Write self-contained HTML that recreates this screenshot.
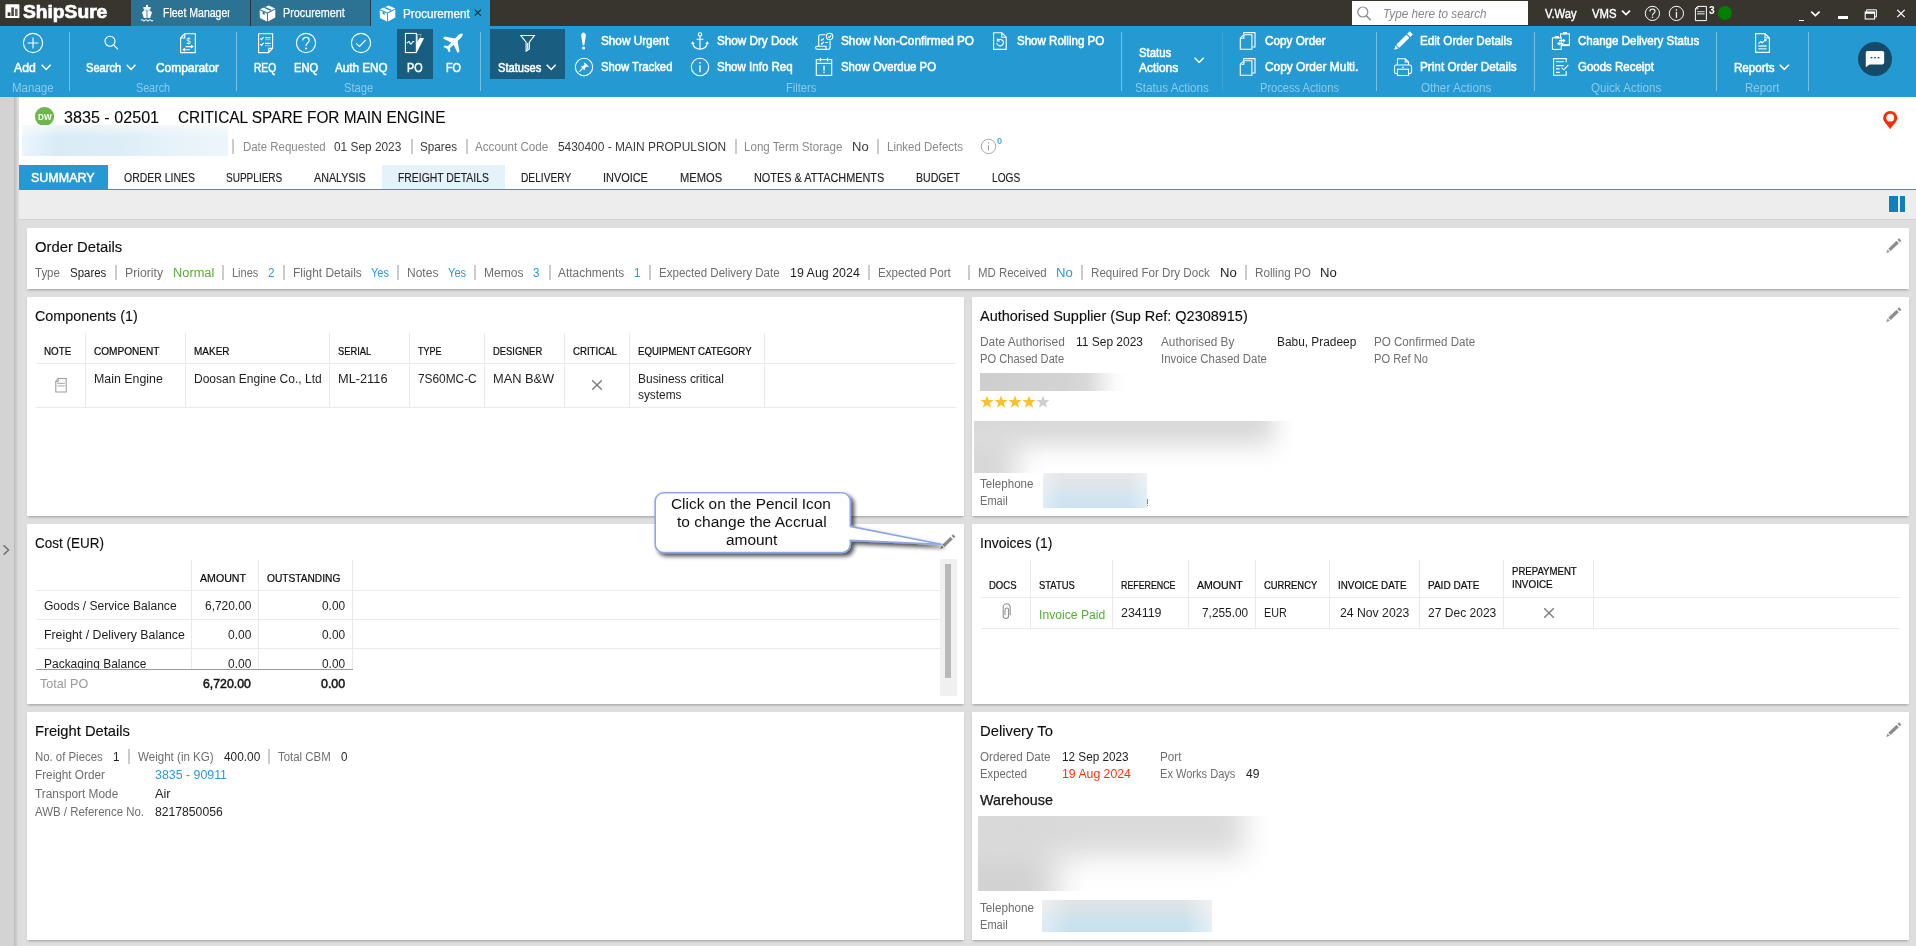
<!DOCTYPE html><html><head><meta charset="utf-8"><title>ShipSure Procurement</title><style>
html,body{margin:0;padding:0}
body{width:1916px;height:946px;overflow:hidden;position:relative;background:#dedede;font-family:"Liberation Sans", sans-serif;}
#r div,#r svg{position:absolute}
#r span.t{position:absolute;white-space:pre;line-height:1;transform-origin:0 0;display:block}
#r span.r{transform-origin:100% 0}

</style></head><body><div id="r">
<div style="left:0px;top:0px;width:1916px;height:26px;background:#38352f;"></div>
<div style="left:0px;top:25.6px;width:1916px;height:71px;background:#2599d1;"></div>
<div style="left:0px;top:96.6px;width:14px;height:850px;background:#d3d3d3;"></div>
<div style="left:14px;top:96.6px;width:5.4px;height:850px;background:linear-gradient(90deg,#b8b8b8 0%,#c9c9c9 35%,#d8d8d8 70%,#dedede 100%);"></div>
<div style="left:19px;top:96.6px;width:1897px;height:93px;background:#fff;"></div>
<div style="left:19px;top:190px;width:1897px;height:29.6px;background:#ededed;"></div>
<div style="left:19px;top:219.4px;width:1897px;height:1px;background:#d2d2d2;"></div>
<svg style="left:2px;top:544px" width="9" height="12" viewBox="0 0 9 12"><path d="M1.6 1.4 L6.6 6 L1.6 10.6" fill="none" stroke="#707070" stroke-width="1.45"/></svg>
<svg style="left:4.5px;top:4px" width="15" height="15" viewBox="0 0 15 15"><rect x="0.4" y="0.2" width="14" height="13.9" rx="0.9" fill="#fff"/><rect x="2.7" y="8.4" width="2.7" height="3.6" fill="#38352f"/><rect x="6.3" y="3.4" width="2.6" height="8.6" fill="#4b4843"/><rect x="10" y="4.8" width="2.6" height="7.2" fill="#67645f"/></svg>
<div style="left:131px;top:0px;width:119.3px;height:25.6px;background:#2c7393;"></div>
<div style="left:250.3px;top:0px;width:0.9px;height:25.6px;background:#2a3238;"></div>
<div style="left:251.2px;top:0px;width:119.3px;height:25.6px;background:#2c7393;"></div>
<div style="left:370.3px;top:0px;width:0.7px;height:25.6px;background:#2a3a44;"></div>
<div style="left:371px;top:0px;width:119px;height:26px;background:#2599d1;"></div>
<svg style="left:140px;top:4px" width="14" height="18" viewBox="0 0 14 18"><g fill="#fff"><rect x="6" y="0.9" width="2" height="2.8"/><rect x="3.3" y="3.1" width="7.4" height="1.7"/><path d="M4.1 4.6 H9.9 L10.3 7 L12 8.3 L10.2 14.1 H3.8 L2 8.3 L3.7 7Z"/></g><rect x="6.55" y="5.6" width="0.9" height="8.6" fill="#2c7393"/><path d="M4.4 6.2 H5.6 M8.4 6.2 H9.6" stroke="#2c7393" stroke-width="0.7"/><path d="M1 16.3 q1 -1.3 2 0 t2 0 t2 0 t2 0 t2 0 t2 0" fill="none" stroke="#fff" stroke-width="1.05"/></svg>
<svg style="left:258.5px;top:4.5px" width="17" height="17" viewBox="0 0 17 17"><g fill="#fff"><path d="M0.7 5.2 L8 8.5 V16.5 L0.9 13.1Z"/><path d="M8.9 8.5 L16.3 4.4 V12.6 L8.9 16.5Z"/><path d="M0.9 4.3 L9.7 0.5 L16.2 3.4 L8.4 7.5Z"/></g><path d="M4.6 2.7 L6.4 1.95 L13 4.9 L11.4 5.75Z" fill="#2c7393"/><path d="M3.7 6.6 L5.7 7.5 V10.2 L4.7 9.3 L3.7 9.4Z" fill="#2c7393"/><path d="M8.45 8.3 V16.4" stroke="#2c7393" stroke-width="0.5"/></svg>
<svg style="left:378.7px;top:4.5px" width="17" height="17" viewBox="0 0 17 17"><g fill="#fff"><path d="M0.7 5.2 L8 8.5 V16.5 L0.9 13.1Z"/><path d="M8.9 8.5 L16.3 4.4 V12.6 L8.9 16.5Z"/><path d="M0.9 4.3 L9.7 0.5 L16.2 3.4 L8.4 7.5Z"/></g><path d="M4.6 2.7 L6.4 1.95 L13 4.9 L11.4 5.75Z" fill="#2599d1"/><path d="M3.7 6.6 L5.7 7.5 V10.2 L4.7 9.3 L3.7 9.4Z" fill="#2599d1"/><path d="M8.45 8.3 V16.4" stroke="#2599d1" stroke-width="0.5"/></svg>
<svg style="left:474.2px;top:9px" width="8" height="8" viewBox="0 0 8 8"><path d="M0.7 0.7 L6.9 6.6 M6.9 0.7 L0.7 6.6" stroke="#1d2a33" stroke-width="1.1" fill="none"/></svg>
<div style="left:1352px;top:1px;width:176px;height:24px;background:#fff;"></div>
<svg style="left:1356px;top:5px" width="16" height="17" viewBox="0 0 16 17"><circle cx="6.8" cy="7" r="5" fill="none" stroke="#8a8a8a" stroke-width="1.2"/><path d="M10.4 10.8 L14.6 15.2" stroke="#8a8a8a" stroke-width="1.5"/></svg>
<svg style="left:1621px;top:9px" width="10" height="8" viewBox="0 0 10 8"><path d="M1 1.6 L5 5.6 L9 1.6" fill="none" stroke="#fff" stroke-width="1.6"/></svg>
<svg style="left:1644px;top:5px" width="17" height="17" viewBox="0 0 17 17"><circle cx="8.4" cy="8.4" r="7.1" fill="none" stroke="#fff" stroke-width="1"/><path d="M5.9 6.6 q0 -2.6 2.6 -2.6 q2.5 0 2.5 2.3 q0 1.3 -1.3 2.1 q-1.2 0.8 -1.2 2.1" fill="none" stroke="#fff" stroke-width="1.1"/><rect x="7.9" y="11.6" width="1.2" height="1.3" fill="#fff"/></svg>
<svg style="left:1668px;top:5px" width="17" height="17" viewBox="0 0 17 17"><circle cx="8.4" cy="8.4" r="7.1" fill="none" stroke="#fff" stroke-width="1"/><rect x="7.8" y="4.2" width="1.3" height="1.4" fill="#fff"/><rect x="7.8" y="6.8" width="1.3" height="6" fill="#fff"/></svg>
<svg style="left:1694px;top:5px" width="14" height="17" viewBox="0 0 14 17"><path d="M3.6 1.4 H12.4 V15.6 H1.4 V3.6Z" fill="none" stroke="#fff" stroke-width="1"/><path d="M1.4 3.8 H3.8 V1.4" fill="none" stroke="#fff" stroke-width="0.9"/><rect x="3.2" y="6.2" width="7.4" height="1" fill="#ddd"/><rect x="3.2" y="8" width="7.4" height="1.6" fill="#aaa"/></svg>
<div style="left:1718px;top:6.2px;width:14.2px;height:14.2px;border-radius:50%;background:#008000"></div>
<div style="left:1798.7px;top:20.2px;width:5.4px;height:1px;background:#fff;"></div>
<svg style="left:1810px;top:9.5px" width="11" height="8" viewBox="0 0 11 8"><path d="M1.2 1.6 L5.4 5.6 L9.6 1.6" fill="none" stroke="#fff" stroke-width="1.7"/></svg>
<div style="left:1838.2px;top:15.8px;width:9.5px;height:3.1px;background:#fff;"></div>
<svg style="left:1864px;top:8.5px" width="14" height="11" viewBox="0 0 14 11"><path d="M2.6 2.8 V0.8 H12.4 V8 H10.6" fill="none" stroke="#fff" stroke-width="1"/><rect x="1.2" y="3" width="9.4" height="7" fill="none" stroke="#fff" stroke-width="1.1"/><rect x="1.2" y="3" width="9.4" height="1.8" fill="#fff"/></svg>
<svg style="left:1896px;top:9px" width="10" height="9" viewBox="0 0 10 9"><path d="M1.3 0.9 L8.7 8.1 M8.7 0.9 L1.3 8.1" stroke="#fff" stroke-width="1.3" fill="none"/></svg>
<div style="left:69.2px;top:32px;width:1px;height:59px;background:rgba(255,255,255,0.38);"></div>
<div style="left:236.2px;top:32px;width:1px;height:59px;background:rgba(255,255,255,0.38);"></div>
<div style="left:480.4px;top:32px;width:1px;height:59px;background:rgba(255,255,255,0.38);"></div>
<div style="left:1121.2px;top:32px;width:1px;height:59px;background:rgba(255,255,255,0.38);"></div>
<div style="left:1376.2px;top:32px;width:1px;height:59px;background:rgba(255,255,255,0.38);"></div>
<div style="left:1534.2px;top:32px;width:1px;height:59px;background:rgba(255,255,255,0.38);"></div>
<div style="left:1716.4px;top:32px;width:1px;height:59px;background:rgba(255,255,255,0.38);"></div>
<div style="left:1808.2px;top:32px;width:1px;height:59px;background:rgba(255,255,255,0.38);"></div>
<div style="left:1222.3px;top:32px;width:1px;height:59px;background:rgba(255,255,255,0.12);"></div>
<div style="left:397px;top:28.8px;width:36px;height:50.2px;background:#195d80;"></div>
<div style="left:490px;top:28.8px;width:75px;height:50.2px;background:#195d80;"></div>
<svg style="left:40.6px;top:64.3px" width="10.4" height="6.3" viewBox="0 0 10.4 6.3"><path d="M0.7 0.7 L5.2 5.3999999999999995 L9.700000000000001 0.7" fill="none" stroke="#fff" stroke-width="1.5"/></svg>
<svg style="left:126.0px;top:64.3px" width="10.2" height="6.3" viewBox="0 0 10.2 6.3"><path d="M0.7 0.7 L5.1 5.3999999999999995 L9.5 0.7" fill="none" stroke="#fff" stroke-width="1.5"/></svg>
<svg style="left:546.0px;top:64.3px" width="10.4" height="6.3" viewBox="0 0 10.4 6.3"><path d="M0.7 0.7 L5.2 5.3999999999999995 L9.700000000000001 0.7" fill="none" stroke="#fff" stroke-width="1.5"/></svg>
<svg style="left:1194.0px;top:56.9px" width="10.4" height="6.3" viewBox="0 0 10.4 6.3"><path d="M0.7 0.7 L5.2 5.3999999999999995 L9.700000000000001 0.7" fill="none" stroke="#fff" stroke-width="1.5"/></svg>
<svg style="left:1779.4px;top:64.3px" width="10.6" height="6.3" viewBox="0 0 10.6 6.3"><path d="M0.7 0.7 L5.3 5.3999999999999995 L9.9 0.7" fill="none" stroke="#fff" stroke-width="1.5"/></svg>
<svg style="left:22px;top:32px" width="22" height="22" viewBox="0 0 22 22"><circle cx="11" cy="11" r="9.6" fill="none" stroke="#fff" stroke-width="1.12"/><path d="M11 5.6 V16.4 M5.6 11 H16.4" fill="none" stroke="#fff" stroke-width="1.12" stroke-width="1.2"/></svg>
<svg style="left:102px;top:33px" width="18" height="18" viewBox="0 0 18 18"><circle cx="8" cy="8.2" r="5" fill="none" stroke="#fff" stroke-width="1.12" stroke-width="1"/><path d="M11.6 11.9 L16 16.4" fill="none" stroke="#fff" stroke-width="1.12" stroke-width="1.3"/></svg>
<svg style="left:179px;top:32px" width="18" height="22" viewBox="0 0 18 22"><path d="M5.6 1.8 H16.3 V20.6 H1.6 V5.8Z" fill="none" stroke="#fff" stroke-width="1.12" stroke-width="1.15"/><path d="M1.8 6 H5.8 V2" fill="none" stroke="#fff" stroke-width="1.12" stroke-width="0.8"/><text x="0" y="0" transform="translate(9.4 11.6) scale(0.8 1)" font-size="9.6" font-family="Liberation Sans, sans-serif" fill="#fff" text-anchor="middle">$</text><path d="M6.6 14.6 H13.6 M12 13.2 L13.8 14.6 L12 16 M11 17.7 H4.4 M6 16.3 L4.2 17.7 L6 19.1" fill="none" stroke="#fff" stroke-width="1.12" stroke-width="0.85"/></svg>
<svg style="left:257px;top:32px" width="18" height="22" viewBox="0 0 18 22"><path d="M1.6 1.8 H15.6 V16.2 L11.6 20.6 H1.6Z" fill="none" stroke="#fff" stroke-width="1.12" stroke-width="1.15"/><path d="M15.4 16.4 H11.8 V20.4" fill="none" stroke="#fff" stroke-width="1.12" stroke-width="0.8"/><path d="M8 5.8 H13.6 M8 11.4 H13.6" fill="none" stroke="#fff" stroke-width="1.12" stroke-width="1"/><path d="M8 7.7 H13.6 M8 13.7 H13.6" stroke="#fff" stroke-width="0.9" opacity="0.6"/><path d="M3.3 6.4 L4.5 7.6 L6.7 5 M3.3 12.2 L4.5 13.4 L6.7 10.8" fill="none" stroke="#fff" stroke-width="1.12" stroke-width="1.05"/></svg>
<svg style="left:295px;top:32px" width="22" height="22" viewBox="0 0 22 22"><circle cx="11" cy="11" r="9.6" fill="none" stroke="#fff" stroke-width="1.12"/><path d="M7.8 8.6 q0 -3.2 3.3 -3.2 q3.1 0 3.1 2.9 q0 1.6 -1.6 2.7 q-1.6 1.1 -1.6 2.9" fill="none" stroke="#fff" stroke-width="1.12" stroke-width="1.5"/><rect x="10.2" y="15.6" width="1.7" height="1.7" fill="#fff"/></svg>
<svg style="left:350px;top:32px" width="22" height="22" viewBox="0 0 22 22"><circle cx="11" cy="11" r="9.6" fill="none" stroke="#fff" stroke-width="1.12"/><path d="M6.2 11.3 L9.5 14.4 L15.8 7.8" fill="none" stroke="#fff" stroke-width="1.12" stroke-width="1.8"/></svg>
<svg style="left:403px;top:32px" width="22" height="22" viewBox="0 0 22 22"><rect x="2.45" y="1.45" width="10.9" height="19.1" fill="none" stroke="#fff" stroke-width="1.12" stroke-width="1.15"/><path d="M4 11.2 L5.3 9.9 q1.3 -0.7 1.5 0.8 q0.2 1.7 1.6 1 q0.9 -0.6 0.9 -1.5 q0.7 -1.1 1.9 -0.4" fill="none" stroke="#fff" stroke-width="1.12" stroke-width="0.95"/><path d="M13.9 2.2 H18.9 L17 5.4 L17.6 3 H14.9 V10.6 H13.9Z" fill="#9dbccc"/><path d="M17 5.6 L21 6.3 L14.2 19.8 L13.2 19.6 V11.2Z" fill="#fff"/></svg>
<svg style="left:442px;top:32px" width="22" height="22" viewBox="0 0 22 22"><path d="M19.6 1.4 q1.4 -0.2 1.2 1.2 q-0.3 1.4 -1.6 2.8 L15.6 9 L17.4 19.4 L15.6 21 L11.6 12.8 L8 16 L8.4 19.2 L7 20.6 L5.2 16.8 L1.4 15 L2.8 13.6 L6 14 L9.2 10.4 L1 6.4 L2.6 4.6 L13 6.4 L16.6 2.8 q1.5 -1.2 3 -1.4Z" fill="#fff"/></svg>
<svg style="left:519px;top:34px" width="18" height="19" viewBox="0 0 18 19"><path d="M1.8 1.5 H15.4 L10.3 8.2 V15 L7.1 17.2 V8.2Z" fill="none" stroke="#fff" stroke-width="1.12" stroke-width="1.5"/><path d="M8.7 9 V15.4" fill="none" stroke="#fff" stroke-width="1.12" stroke-width="0.7"/></svg>
<svg style="left:579px;top:31px" width="9" height="20" viewBox="0 0 9 20"><path d="M2 3.4 q2.5 -3.6 5 0 L5.3 14.2 H3.7Z" fill="#fff"/><circle cx="4.5" cy="17" r="1.55" fill="#fff"/></svg>
<svg style="left:574px;top:57px" width="20" height="20" viewBox="0 0 20 20"><circle cx="10" cy="10" r="8.7" fill="none" stroke="#fff" stroke-width="1.12"/><path d="M10.4 5.2 L14.8 9.6 L13.8 10 L12.6 9.4 L10.8 11.2 L10.6 13.4 L6.6 9.4 L8.8 9.2 L10.6 7.4 L10 6.2Z" fill="#fff"/><path d="M8.6 11.4 L5.4 14.6" fill="none" stroke="#fff" stroke-width="1.12" stroke-width="1"/></svg>
<svg style="left:691px;top:31px" width="18" height="20" viewBox="0 0 18 20"><circle cx="9" cy="3.4" r="1.7" fill="none" stroke="#fff" stroke-width="1.12"/><path d="M9 5.2 V18 M5.6 8.2 H12.4 M1.6 11.4 q0.6 6.4 7.4 6.8 q6.8 -0.4 7.4 -6.8 M0.6 13 L1.6 11.2 L3.2 12.8 M14.8 12.8 L16.4 11.2 L17.4 13" fill="none" stroke="#fff" stroke-width="1.12" stroke-width="1.2"/></svg>
<svg style="left:690px;top:57px" width="20" height="20" viewBox="0 0 20 20"><circle cx="10" cy="10" r="8.7" fill="none" stroke="#fff" stroke-width="1.12"/><rect x="9.3" y="5" width="1.4" height="1.6" fill="#fff"/><rect x="9.3" y="8.2" width="1.4" height="7" fill="#fff"/></svg>
<svg style="left:814px;top:32px" width="20" height="19" viewBox="0 0 20 19"><path d="M4.7 14.2 V4.5 q0 -1.7 1.7 -1.7 H11.6 M16.1 8.4 V15.2 q0 2.2 -2.1 2.2" fill="none" stroke="#fff" stroke-width="1.12" stroke-width="1"/><path d="M2.9 14.3 H12 V15.9 q0 1.5 1.8 1.5 H3.6 q-2 0 -2 -1.6 q0 -1.5 1.3 -1.5Z" fill="none" stroke="#fff" stroke-width="1.12" stroke-width="1"/><circle cx="15.6" cy="4.5" r="3.2" fill="none" stroke="#fff" stroke-width="1.12" stroke-width="0.95"/><path d="M14.1 4.7 L15.2 5.7 L17.2 3.4" fill="none" stroke="#fff" stroke-width="1.12" stroke-width="0.9"/><path d="M7 7.7 L7.8 8.4 L9.8 6.3 M7 11.5 L7.8 12.2 L9.8 9.8 M11.2 10.5 H14" fill="none" stroke="#fff" stroke-width="1.12" stroke-width="0.85"/></svg>
<svg style="left:815px;top:57px" width="18" height="20" viewBox="0 0 18 20"><rect x="1.3" y="2.6" width="15.4" height="15.8" fill="none" stroke="#fff" stroke-width="1.12" stroke-width="1.15"/><path d="M1.3 6.4 H16.7" fill="none" stroke="#fff" stroke-width="1.12" stroke-width="1"/><path d="M5.4 0.8 V4.6 M12.6 0.8 V4.6" fill="none" stroke="#fff" stroke-width="1.12" stroke-width="1.6"/><rect x="8.3" y="8.6" width="1.4" height="5" fill="#fff"/><rect x="8.3" y="14.6" width="1.4" height="1.4" fill="#fff"/></svg>
<svg style="left:992px;top:31px" width="16" height="20" viewBox="0 0 16 20"><path d="M1.6 1.8 H9.8 L14.2 6.2 V18.4 H1.6Z" fill="none" stroke="#fff" stroke-width="1.12"/><path d="M9.8 1.8 V6.2 H14.2" fill="none" stroke="#fff" stroke-width="1.12" stroke-width="0.9"/><path d="M6 9 A3.3 3.3 0 1 1 4.8 12" fill="none" stroke="#fff" stroke-width="1.12" stroke-width="0.95"/><path d="M5.4 7.6 V10 H7.8" fill="none" stroke="#fff" stroke-width="1.12" stroke-width="0.9"/></svg>
<svg style="left:1239.4px;top:31px" width="18" height="20" viewBox="0 0 18 20"><path d="M4.7 3.2 V1.6 H16 V16 H13.4" fill="none" stroke="#fff" stroke-width="1.12" stroke-width="1.1"/><path d="M4.8 3.7 H12.9 V18.3 H1.3 V7.2Z" fill="none" stroke="#fff" stroke-width="1.12" stroke-width="1.2"/><path d="M1.5 7.3 H4.9 V3.9" fill="none" stroke="#fff" stroke-width="1.12" stroke-width="0.8"/></svg>
<svg style="left:1239.4px;top:57.3px" width="18" height="20" viewBox="0 0 18 20"><path d="M4.7 3.2 V1.6 H16 V16 H13.4" fill="none" stroke="#fff" stroke-width="1.12" stroke-width="1.1"/><path d="M4.8 3.7 H12.9 V18.3 H1.3 V7.2Z" fill="none" stroke="#fff" stroke-width="1.12" stroke-width="1.2"/><path d="M1.5 7.3 H4.9 V3.9" fill="none" stroke="#fff" stroke-width="1.12" stroke-width="0.8"/></svg>
<svg style="left:1393px;top:31px" width="20" height="20" viewBox="0 0 20 20"><g transform="rotate(-44.6 10 10)" fill="#fff"><path d="M-2.4 10 L1.6 7.9 V12.1Z"/><rect x="2.6" y="7.8" width="14.2" height="4.4"/><rect x="18" y="7.8" width="3.6" height="4.4"/></g></svg>
<svg style="left:1393px;top:57px" width="20" height="20" viewBox="0 0 20 20"><path d="M4.5 8 V1.8 H12.2 L15.5 5 V8" fill="none" stroke="#fff" stroke-width="1.12" stroke-width="1.1"/><path d="M12.2 1.8 V5 H15.5" fill="none" stroke="#fff" stroke-width="1.12" stroke-width="0.8"/><rect x="1.5" y="8" width="17" height="8.6" rx="1.8" fill="none" stroke="#fff" stroke-width="1.12" stroke-width="1.15"/><rect x="4.5" y="12.2" width="11" height="6.3" fill="#2599d1" stroke="#fff" stroke-width="1.1"/><path d="M9 10.2 H11" fill="none" stroke="#fff" stroke-width="1.12"/></svg>
<svg style="left:1551px;top:31px" width="20" height="20" viewBox="0 0 20 20"><rect x="9.6" y="2.8" width="8.8" height="11" fill="none" stroke="#fff" stroke-width="1.12"/><rect x="12" y="1" width="4" height="2.4" fill="#fff"/><path d="M9.6 14.4 H18.4" stroke="#fff" stroke-width="1.4"/><rect x="1.4" y="6.8" width="8.8" height="11.6" fill="#2599d1" stroke="#fff" stroke-width="1.05"/><rect x="3.8" y="5" width="4" height="2.4" fill="#fff"/><path d="M8 9.6 H13.6 M12 8.2 L13.8 9.6 L12 11 M12.4 12.6 H7 M8.6 11.2 L6.8 12.6 L8.6 14" fill="none" stroke="#fff" stroke-width="1.12" stroke-width="0.9"/></svg>
<svg style="left:1552px;top:57px" width="18" height="20" viewBox="0 0 18 20"><path d="M14.2 5.4 V1.6 H1.6 V18.2 H14.2 V14" fill="none" stroke="#fff" stroke-width="1.12" stroke-width="1.15"/><path d="M4 4.8 H11.8 M4 8.6 H11.8 M4 11.9 H7.6 M4 15.4 H7.8" fill="none" stroke="#fff" stroke-width="1.12" stroke-width="0.9"/><path d="M9.6 10.6 L11.8 12.8 L16.4 7.8" fill="none" stroke="#fff" stroke-width="1.12" stroke-width="1.1"/></svg>
<svg style="left:1754px;top:32px" width="17" height="22" viewBox="0 0 17 22"><path d="M1.6 1.6 H11 L15.4 6 V20.4 H1.6Z" fill="none" stroke="#fff" stroke-width="1.12" stroke-width="1.15"/><path d="M11 1.6 V6 H15.4" fill="none" stroke="#fff" stroke-width="1.12" stroke-width="0.8"/><path d="M4.6 11.6 L6.8 9.6 L8.2 10.8 L11.8 7.6 M10.2 7.6 H12 V9.2" fill="none" stroke="#fff" stroke-width="1.12" stroke-width="0.85"/><path d="M4.2 14 H12.6 M4.2 16.8 H12.6" stroke="#fff" stroke-width="1.3" opacity="0.85"/></svg>
<div style="left:1858px;top:42px;width:34px;height:34px;border-radius:50%;background:#164a69"></div>
<svg style="left:1864px;top:49px" width="22" height="20" viewBox="0 0 22 20"><path d="M3.2 2 H18.4 q1.8 0 1.8 1.8 V13.6 q0 1.8 -1.8 1.8 H5.6 L1.8 18.2 V3.6 q0 -1.6 1.4 -1.6Z" fill="#fbfbfb"/><g fill="#164a69"><rect x="6.6" y="8" width="1.8" height="1.3"/><rect x="10.1" y="8" width="1.8" height="1.3"/><rect x="13.6" y="8" width="1.8" height="1.3"/></g></svg>
<div style="left:35.4px;top:107.4px;width:18.2px;height:18.2px;border-radius:50%;background:#6bb74c"></div>
<div style="left:22.3px;top:125.2px;width:205.7px;height:30.4px;background:linear-gradient(100deg,#eef6fb 0%,#d9ecf6 18%,#dcedf6 45%,#e6f2f9 70%,#edf6fb 100%);"></div>
<div style="left:22.3px;top:125.2px;width:205.7px;height:12px;background:linear-gradient(180deg,rgba(255,255,255,.55),rgba(255,255,255,0));"></div>
<div style="left:232px;top:139px;width:1.5px;height:14.5px;background:#cccccc;"></div>
<div style="left:411px;top:139px;width:1.5px;height:14.5px;background:#cccccc;"></div>
<div style="left:466px;top:139px;width:1.5px;height:14.5px;background:#cccccc;"></div>
<div style="left:735px;top:139px;width:1.5px;height:14.5px;background:#cccccc;"></div>
<div style="left:877px;top:139px;width:1.5px;height:14.5px;background:#cccccc;"></div>
<svg style="left:980px;top:138px" width="17" height="17" viewBox="0 0 17 17"><circle cx="8.5" cy="8.4" r="7.2" fill="none" stroke="#a6a6a6" stroke-width="1"/><rect x="8.05" y="4.4" width="0.95" height="1.3" fill="#999"/><rect x="8.05" y="7" width="0.95" height="5.6" fill="#999"/></svg>
<svg style="left:1882px;top:110px" width="17" height="20" viewBox="0 0 17 20"><path d="M8.2 0.9 a7.1 7.1 0 0 1 7.1 7.1 c0 3.6 -4.6 7.2 -7.1 11.2 c-2.5 -4 -7.1 -7.6 -7.1 -11.2 a7.1 7.1 0 0 1 7.1 -7.1Z" fill="#fb2c04"/><circle cx="8.2" cy="7.7" r="3.9" fill="#fff"/></svg>
<div style="left:19px;top:165.2px;width:89px;height:24.8px;background:#2599d1;"></div>
<div style="left:382.2px;top:165.2px;width:122.4px;height:23.5px;background:#e5f2f9;"></div>
<div style="left:19px;top:188.8px;width:1897px;height:1.5px;background:#2599d1;"></div>
<div style="left:1888.8px;top:196.1px;width:8.9px;height:15.8px;background:#0f80ba;"></div>
<div style="left:1900.0px;top:196.1px;width:5.0px;height:15.8px;background:#0f80ba;"></div>
<div style="left:27px;top:228px;width:1881.6px;height:60.9px;background:#fff;box-shadow:0 2.2px 2.4px -1.2px rgba(0,0,0,0.30);"></div>
<div style="left:27px;top:297px;width:936.7px;height:218.8px;background:#fff;box-shadow:0 2.2px 2.4px -1.2px rgba(0,0,0,0.30);"></div>
<div style="left:972.2px;top:297px;width:936.4px;height:218.8px;background:#fff;box-shadow:0 2.2px 2.4px -1.2px rgba(0,0,0,0.30);"></div>
<div style="left:27px;top:524.2px;width:936.7px;height:179.6px;background:#fff;box-shadow:0 2.2px 2.4px -1.2px rgba(0,0,0,0.30);"></div>
<div style="left:972.2px;top:524.2px;width:936.4px;height:179.6px;background:#fff;box-shadow:0 2.2px 2.4px -1.2px rgba(0,0,0,0.30);"></div>
<div style="left:27px;top:712.2px;width:936.7px;height:227.6px;background:#fff;box-shadow:0 2.2px 2.4px -1.2px rgba(0,0,0,0.30);"></div>
<div style="left:972.2px;top:712.2px;width:936.4px;height:227.6px;background:#fff;box-shadow:0 2.2px 2.4px -1.2px rgba(0,0,0,0.30);"></div>
<svg style="left:1885.6px;top:237.6px" width="16" height="16" viewBox="0 0 16 16"><g transform="rotate(-44 7.7 7.8)" fill="#8c8c8c"><path d="M-2.6 7.8 L0.7 6.3 V9.3Z"/><rect x="1.8" y="6.1" width="11.4" height="3.4"/><rect x="14.5" y="6.1" width="2.3" height="3.4"/></g></svg>
<svg style="left:1885.6px;top:306.6px" width="16" height="16" viewBox="0 0 16 16"><g transform="rotate(-44 7.7 7.8)" fill="#8c8c8c"><path d="M-2.6 7.8 L0.7 6.3 V9.3Z"/><rect x="1.8" y="6.1" width="11.4" height="3.4"/><rect x="14.5" y="6.1" width="2.3" height="3.4"/></g></svg>
<svg style="left:940.4px;top:533.6px" width="16" height="16" viewBox="0 0 16 16"><g transform="rotate(-44 7.7 7.8)" fill="#8c8c8c"><path d="M-2.6 7.8 L0.7 6.3 V9.3Z"/><rect x="1.8" y="6.1" width="11.4" height="3.4"/><rect x="14.5" y="6.1" width="2.3" height="3.4"/></g></svg>
<svg style="left:1885.6px;top:721.8px" width="16" height="16" viewBox="0 0 16 16"><g transform="rotate(-44 7.7 7.8)" fill="#8c8c8c"><path d="M-2.6 7.8 L0.7 6.3 V9.3Z"/><rect x="1.8" y="6.1" width="11.4" height="3.4"/><rect x="14.5" y="6.1" width="2.3" height="3.4"/></g></svg>
<div style="left:115px;top:265.4px;width:1.5px;height:14.2px;background:#cbcbcb;"></div>
<div style="left:222px;top:265.4px;width:1.5px;height:14.2px;background:#cbcbcb;"></div>
<div style="left:283px;top:265.4px;width:1.5px;height:14.2px;background:#cbcbcb;"></div>
<div style="left:397px;top:265.4px;width:1.5px;height:14.2px;background:#cbcbcb;"></div>
<div style="left:474px;top:265.4px;width:1.5px;height:14.2px;background:#cbcbcb;"></div>
<div style="left:549px;top:265.4px;width:1.5px;height:14.2px;background:#cbcbcb;"></div>
<div style="left:649px;top:265.4px;width:1.5px;height:14.2px;background:#cbcbcb;"></div>
<div style="left:868px;top:265.4px;width:1.5px;height:14.2px;background:#cbcbcb;"></div>
<div style="left:968px;top:265.4px;width:1.5px;height:14.2px;background:#cbcbcb;"></div>
<div style="left:1081px;top:265.4px;width:1.5px;height:14.2px;background:#cbcbcb;"></div>
<div style="left:1245px;top:265.4px;width:1.5px;height:14.2px;background:#cbcbcb;"></div>
<div style="left:85.1px;top:333px;width:1px;height:74.5px;background:#eaeaea;"></div>
<div style="left:184.8px;top:333px;width:1px;height:74.5px;background:#eaeaea;"></div>
<div style="left:329.1px;top:333px;width:1px;height:74.5px;background:#eaeaea;"></div>
<div style="left:409.0px;top:333px;width:1px;height:74.5px;background:#eaeaea;"></div>
<div style="left:484.1px;top:333px;width:1px;height:74.5px;background:#eaeaea;"></div>
<div style="left:563.9px;top:333px;width:1px;height:74.5px;background:#eaeaea;"></div>
<div style="left:629.1px;top:333px;width:1px;height:74.5px;background:#eaeaea;"></div>
<div style="left:763.8px;top:333px;width:1px;height:74.5px;background:#eaeaea;"></div>
<div style="left:35.6px;top:362.7px;width:920.4px;height:1px;background:#eaeaea;"></div>
<div style="left:35.6px;top:406.9px;width:920.4px;height:1px;background:#eaeaea;"></div>
<svg style="left:591px;top:379.2px" width="12" height="12" viewBox="0 0 12 12"><path d="M1.2 1.2 L10.8 10.8 M10.8 1.2 L1.2 10.8" stroke="#7d7d7d" stroke-width="1.45" fill="none"/></svg>
<svg style="left:54px;top:377.2px" width="14" height="17" viewBox="0 0 14 17"><path d="M4.1 1.5 H12.2 V15 H1.8 V4.4Z" fill="none" stroke="#9c9c9c" stroke-width="1.05"/><path d="M1.8 4.5 H4.3 V1.6" fill="none" stroke="#9c9c9c" stroke-width="0.9"/><path d="M3.2 6.3 H10.8" stroke="#a0a0a0" stroke-width="1"/><path d="M3.2 8.9 H10.8" stroke="#cdcdcd" stroke-width="1.7"/></svg>
<div style="left:980px;top:373.2px;width:146px;height:17.5px;background:linear-gradient(90deg,#cecece 0%,#d3d3d3 60%,#d9d9d9 73%,#ececec 84%,#fbfbfb 93%,#fff 100%);"></div>
<svg style="left:980.3px;top:395.2px" width="14" height="13" viewBox="0 0 14 13"><path d="M7 0.4 L8.7 4.9 L13.6 5.1 L9.8 8.1 L11.1 12.8 L7 10.1 L2.9 12.8 L4.2 8.1 L0.4 5.1 L5.3 4.9Z" fill="#fbc22d"/></svg>
<svg style="left:994.3299999999999px;top:395.2px" width="14" height="13" viewBox="0 0 14 13"><path d="M7 0.4 L8.7 4.9 L13.6 5.1 L9.8 8.1 L11.1 12.8 L7 10.1 L2.9 12.8 L4.2 8.1 L0.4 5.1 L5.3 4.9Z" fill="#fbc22d"/></svg>
<svg style="left:1008.3599999999999px;top:395.2px" width="14" height="13" viewBox="0 0 14 13"><path d="M7 0.4 L8.7 4.9 L13.6 5.1 L9.8 8.1 L11.1 12.8 L7 10.1 L2.9 12.8 L4.2 8.1 L0.4 5.1 L5.3 4.9Z" fill="#fbc22d"/></svg>
<svg style="left:1022.39px;top:395.2px" width="14" height="13" viewBox="0 0 14 13"><path d="M7 0.4 L8.7 4.9 L13.6 5.1 L9.8 8.1 L11.1 12.8 L7 10.1 L2.9 12.8 L4.2 8.1 L0.4 5.1 L5.3 4.9Z" fill="#fbc22d"/></svg>
<svg style="left:1036.4199999999998px;top:395.2px" width="14" height="13" viewBox="0 0 14 13"><path d="M7 0.4 L8.7 4.9 L13.6 5.1 L9.8 8.1 L11.1 12.8 L7 10.1 L2.9 12.8 L4.2 8.1 L0.4 5.1 L5.3 4.9Z" fill="#cfcfcf"/></svg>
<div style="left:974.3px;top:420.8px;width:317.6px;height:51.8px;overflow:hidden;background:#fff"><div style="left:-30px;top:-28px;width:330px;height:52px;background:#d8d8d8;filter:blur(12px)"></div><div style="left:-30px;top:8px;width:72px;height:70px;background:#d8d8d8;filter:blur(13px)"></div></div>
<div style="left:1043.2px;top:473.1px;width:103.7px;height:34.6px;background:linear-gradient(90deg,rgba(255,255,255,.35),rgba(255,255,255,0) 18%,rgba(255,255,255,0) 82%,rgba(255,255,255,.4)),linear-gradient(180deg,#e6e8ea 0%,#dfe5ea 35%,#d0e5f0 70%,#cbe3f0 100%);"></div>
<div style="left:1147.2px;top:499.4px;width:1px;height:5px;background:#3a9fdc;"></div>
<div style="left:1147.2px;top:505.4px;width:1px;height:1px;background:#3a9fdc;"></div>
<div style="left:190.9px;top:560.2px;width:1px;height:109px;background:#eaeaea;"></div>
<div style="left:258.0px;top:560.2px;width:1px;height:109px;background:#eaeaea;"></div>
<div style="left:352.0px;top:560.2px;width:1px;height:109px;background:#eaeaea;"></div>
<div style="left:36.1px;top:589.8px;width:903.9px;height:1px;background:#eaeaea;"></div>
<div style="left:36.1px;top:618.7px;width:903.9px;height:1px;background:#eaeaea;"></div>
<div style="left:36.1px;top:647.7px;width:903.9px;height:1px;background:#eaeaea;"></div>
<div style="left:36.1px;top:668.9px;width:316.8px;height:1px;background:#9a9a9a;"></div>
<div style="left:36.1px;top:669.9px;width:316.8px;height:6px;background:#fff;"></div>
<div style="left:940.2px;top:559.4px;width:17px;height:136.4px;background:#f0f0f0;"></div>
<div style="left:945.2px;top:563.8px;width:6.2px;height:114px;background:#b9b9b9;"></div>
<div style="left:1029.9px;top:560.4px;width:1px;height:68.4px;background:#eaeaea;"></div>
<div style="left:1112.0px;top:560.4px;width:1px;height:68.4px;background:#eaeaea;"></div>
<div style="left:1187.9px;top:560.4px;width:1px;height:68.4px;background:#eaeaea;"></div>
<div style="left:1255.1px;top:560.4px;width:1px;height:68.4px;background:#eaeaea;"></div>
<div style="left:1329.0px;top:560.4px;width:1px;height:68.4px;background:#eaeaea;"></div>
<div style="left:1419.0px;top:560.4px;width:1px;height:68.4px;background:#eaeaea;"></div>
<div style="left:1502.8px;top:560.4px;width:1px;height:68.4px;background:#eaeaea;"></div>
<div style="left:1593.0px;top:560.4px;width:1px;height:68.4px;background:#eaeaea;"></div>
<div style="left:981px;top:596.8px;width:919.4px;height:1px;background:#eaeaea;"></div>
<div style="left:981px;top:627.9px;width:919.4px;height:1px;background:#eaeaea;"></div>
<svg style="left:1543px;top:607.4px" width="12" height="12" viewBox="0 0 12 12"><path d="M1.2 1.2 L10.8 10.8 M10.8 1.2 L1.2 10.8" stroke="#7d7d7d" stroke-width="1.45" fill="none"/></svg>
<svg style="left:1000.6px;top:602.8px" width="11" height="17" viewBox="0 0 11 17"><path d="M9.2 11.8 V4.3 a3.5 3.5 0 0 0 -7 0 V12.7 a2.7 2.7 0 0 0 5.4 0 V6.8 a1.8 1.8 0 0 0 -3.6 0 V11.7" fill="none" stroke="#8e8e8e" stroke-width="1.05" stroke-linecap="round"/></svg>
<div style="left:128px;top:749.4px;width:1.5px;height:14.2px;background:#cbcbcb;"></div>
<div style="left:268px;top:749.4px;width:1.5px;height:14.2px;background:#cbcbcb;"></div>
<div style="left:978.2px;top:816px;width:292px;height:74.6px;overflow:hidden;background:#fff"><div style="left:-30px;top:-30px;width:296px;height:70px;background:#dadada;filter:blur(14px)"></div><div style="left:-34px;top:26px;width:112px;height:84px;background:#d2d2d2;filter:blur(17px)"></div></div>
<div style="left:1042.1px;top:900.2px;width:169.7px;height:31.4px;background:linear-gradient(90deg,rgba(255,255,255,.4),rgba(255,255,255,0) 16%,rgba(255,255,255,0) 84%,rgba(255,255,255,.5)),linear-gradient(180deg,#e2e5e8 0%,#d9e2e8 35%,#cae2ee 70%,#c6e1ee 100%);"></div>
<svg style="left:645px;top:482px" width="310" height="84" viewBox="645 482 310 84">
<defs><filter id="sh" x="-10%" y="-20%" width="125%" height="150%"><feGaussianBlur in="SourceAlpha" stdDeviation="2"/><feOffset dx="2.6" dy="3"/><feComponentTransfer><feFuncA type="linear" slope="0.7"/></feComponentTransfer><feMerge><feMergeNode/><feMergeNode in="SourceGraphic"/></feMerge></filter></defs>
<path filter="url(#sh)" d="M663.5 492.8 H842 a8.3 8.3 0 0 1 8.3 8.3 V526.4 L940.9 544.3 L850.3 540.4 V544.2 a8.3 8.3 0 0 1 -8.3 8.3 H663.5 a8.3 8.3 0 0 1 -8.3 -8.3 V501.1 a8.3 8.3 0 0 1 8.3 -8.3Z" fill="#fff" stroke="#8ea6e6" stroke-width="1.6" stroke-linejoin="round"/>
</svg>
<span class="t" id="t0" style="top:3.00px;font-size:18.4px;color:#fff;font-weight:700;-webkit-text-stroke:0.7px #fff;left:23.00px;transform:scaleX(1.0442);">ShipSure</span>
<span class="t" id="t1" style="top:7.00px;font-size:12px;color:#fff;-webkit-text-stroke:0.25px #fff;left:163.10px;transform:scaleX(0.8761);clip-path:inset(-3px 1.58px -3px -3px);">Fleet Manager</span>
<span class="t" id="t2" style="top:7.00px;font-size:12px;color:#fff;-webkit-text-stroke:0.25px #fff;left:283.00px;transform:scaleX(0.8981);">Procurement</span>
<span class="t" id="t3" style="top:8.00px;font-size:12px;color:#fff;-webkit-text-stroke:0.25px #fff;left:403.10px;transform:scaleX(0.9723);">Procurement</span>
<span class="t" id="t4" style="top:7.00px;font-size:13px;color:#868686;font-style:italic;left:1382.50px;transform:scaleX(0.9036);">Type here to search</span>
<span class="t" id="t5" style="top:7.00px;font-size:13px;color:#fff;-webkit-text-stroke:0.4px #fff;left:1544.50px;transform:scaleX(0.8632);">V.Way</span>
<span class="t" id="t6" style="top:7.00px;font-size:13px;color:#fff;-webkit-text-stroke:0.4px #fff;left:1591.90px;transform:scaleX(0.8697);">VMS</span>
<span class="t" id="t7" style="top:5.00px;font-size:10.5px;color:#fff;font-weight:700;left:1708.92px;transform:scaleX(0.9700);">3</span>
<span class="t" id="t8" style="top:61.00px;font-size:13px;color:#fff;-webkit-text-stroke:0.55px #fff;left:13.70px;transform:scaleX(0.9377);">Add</span>
<span class="t" id="t9" style="top:61.00px;font-size:13px;color:#fff;-webkit-text-stroke:0.55px #fff;left:86.30px;transform:scaleX(0.8519);">Search</span>
<span class="t" id="t10" style="top:61.00px;font-size:13px;color:#fff;-webkit-text-stroke:0.55px #fff;left:155.70px;transform:scaleX(0.9178);">Comparator</span>
<span class="t" id="t11" style="top:61.00px;font-size:13px;color:#fff;-webkit-text-stroke:0.55px #fff;left:254.30px;transform:scaleX(0.7845);">REQ</span>
<span class="t" id="t12" style="top:61.00px;font-size:13px;color:#fff;-webkit-text-stroke:0.55px #fff;left:294.10px;transform:scaleX(0.8519);">ENQ</span>
<span class="t" id="t13" style="top:61.00px;font-size:13px;color:#fff;-webkit-text-stroke:0.55px #fff;left:334.80px;transform:scaleX(0.8970);">Auth ENQ</span>
<span class="t" id="t14" style="top:61.00px;font-size:13px;color:#fff;-webkit-text-stroke:0.55px #fff;left:407.10px;transform:scaleX(0.8299);">PO</span>
<span class="t" id="t15" style="top:61.00px;font-size:13px;color:#fff;-webkit-text-stroke:0.55px #fff;left:445.90px;transform:scaleX(0.8304);">FO</span>
<span class="t" id="t16" style="top:61.00px;font-size:13px;color:#fff;-webkit-text-stroke:0.55px #fff;left:498.00px;transform:scaleX(0.8558);">Statuses</span>
<span class="t" id="t17" style="top:34.00px;font-size:13px;color:#fff;-webkit-text-stroke:0.55px #fff;left:601.20px;transform:scaleX(0.9035);">Show Urgent</span>
<span class="t" id="t18" style="top:60.00px;font-size:13px;color:#fff;-webkit-text-stroke:0.55px #fff;left:601.20px;transform:scaleX(0.8668);">Show Tracked</span>
<span class="t" id="t19" style="top:34.00px;font-size:13px;color:#fff;-webkit-text-stroke:0.55px #fff;left:717.10px;transform:scaleX(0.8987);">Show Dry Dock</span>
<span class="t" id="t20" style="top:60.00px;font-size:13px;color:#fff;-webkit-text-stroke:0.55px #fff;left:717.10px;transform:scaleX(0.8877);">Show Info Req</span>
<span class="t" id="t21" style="top:34.00px;font-size:13px;color:#fff;-webkit-text-stroke:0.55px #fff;left:841.10px;transform:scaleX(0.9068);">Show Non-Confirmed PO</span>
<span class="t" id="t22" style="top:60.00px;font-size:13px;color:#fff;-webkit-text-stroke:0.55px #fff;left:841.10px;transform:scaleX(0.8765);">Show Overdue PO</span>
<span class="t" id="t23" style="top:34.00px;font-size:13px;color:#fff;-webkit-text-stroke:0.55px #fff;left:1016.90px;transform:scaleX(0.8872);">Show Rolling PO</span>
<span class="t" id="t24" style="top:46.00px;font-size:13px;color:#fff;-webkit-text-stroke:0.55px #fff;left:1138.90px;transform:scaleX(0.8736);">Status</span>
<span class="t" id="t25" style="top:61.00px;font-size:13px;color:#fff;-webkit-text-stroke:0.55px #fff;left:1138.90px;transform:scaleX(0.9193);">Actions</span>
<span class="t" id="t26" style="top:34.00px;font-size:13px;color:#fff;-webkit-text-stroke:0.55px #fff;left:1264.80px;transform:scaleX(0.9047);">Copy Order</span>
<span class="t" id="t27" style="top:60.00px;font-size:13px;color:#fff;-webkit-text-stroke:0.55px #fff;left:1264.80px;transform:scaleX(0.9158);">Copy Order Multi.</span>
<span class="t" id="t28" style="top:34.00px;font-size:13px;color:#fff;-webkit-text-stroke:0.55px #fff;left:1420.30px;transform:scaleX(0.8967);">Edit Order Details</span>
<span class="t" id="t29" style="top:60.00px;font-size:13px;color:#fff;-webkit-text-stroke:0.55px #fff;left:1420.30px;transform:scaleX(0.9044);">Print Order Details</span>
<span class="t" id="t30" style="top:34.00px;font-size:13px;color:#fff;-webkit-text-stroke:0.55px #fff;left:1578.00px;transform:scaleX(0.8881);">Change Delivery Status</span>
<span class="t" id="t31" style="top:60.00px;font-size:13px;color:#fff;-webkit-text-stroke:0.55px #fff;left:1578.00px;transform:scaleX(0.8826);">Goods Receipt</span>
<span class="t" id="t32" style="top:61.00px;font-size:13px;color:#fff;-webkit-text-stroke:0.55px #fff;left:1733.90px;transform:scaleX(0.8917);">Reports</span>
<span class="t" id="t33" style="top:82.00px;font-size:12px;color:#8acbec;left:12.00px;transform:scaleX(0.9614);">Manage</span>
<span class="t" id="t34" style="top:82.00px;font-size:12px;color:#8acbec;left:135.80px;transform:scaleX(0.8940);">Search</span>
<span class="t" id="t35" style="top:82.00px;font-size:12px;color:#8acbec;left:344.20px;transform:scaleX(0.9280);">Stage</span>
<span class="t" id="t36" style="top:82.00px;font-size:12px;color:#8acbec;left:786.20px;transform:scaleX(0.9243);">Filters</span>
<span class="t" id="t37" style="top:82.00px;font-size:12px;color:#8acbec;left:1135.20px;transform:scaleX(0.9718);">Status Actions</span>
<span class="t" id="t38" style="top:82.00px;font-size:12px;color:#8acbec;left:1259.80px;transform:scaleX(0.9253);">Process Actions</span>
<span class="t" id="t39" style="top:82.00px;font-size:12px;color:#8acbec;left:1420.50px;transform:scaleX(0.9758);">Other Actions</span>
<span class="t" id="t40" style="top:82.00px;font-size:12px;color:#8acbec;left:1590.50px;transform:scaleX(0.9669);">Quick Actions</span>
<span class="t" id="t41" style="top:82.00px;font-size:12px;color:#8acbec;left:1745.20px;transform:scaleX(0.9547);">Report</span>
<span class="t" id="t42" style="top:112.00px;font-size:9.4px;color:#fff;font-weight:700;left:37.50px;transform:scaleX(0.8704);">DW</span>
<span class="t" id="t43" style="top:110.00px;font-size:16px;color:#060606;-webkit-text-stroke:0.1px #060606;left:64.30px;transform:scaleX(1.0083);">3835 - 02501</span>
<span class="t" id="t44" style="top:110.00px;font-size:16px;color:#060606;-webkit-text-stroke:0.1px #060606;left:178.00px;transform:scaleX(0.9610);">CRITICAL SPARE FOR MAIN ENGINE</span>
<span class="t" id="t45" style="top:141.00px;font-size:12px;color:#8a8a8a;left:242.50px;transform:scaleX(0.9523);">Date Requested</span>
<span class="t" id="t46" style="top:141.00px;font-size:12px;color:#3a3a3a;left:334.40px;transform:scaleX(0.9888);">01 Sep 2023</span>
<span class="t" id="t47" style="top:141.00px;font-size:12px;color:#3a3a3a;left:420.10px;transform:scaleX(0.9729);">Spares</span>
<span class="t" id="t48" style="top:141.00px;font-size:12px;color:#8a8a8a;left:475.10px;transform:scaleX(0.9723);">Account Code</span>
<span class="t" id="t49" style="top:141.00px;font-size:12px;color:#3a3a3a;left:557.80px;transform:scaleX(0.9923);">5430400 - MAIN PROPULSION</span>
<span class="t" id="t50" style="top:141.00px;font-size:12px;color:#8a8a8a;left:744.10px;transform:scaleX(0.9662);">Long Term Storage</span>
<span class="t" id="t51" style="top:141.00px;font-size:12px;color:#3a3a3a;left:851.90px;transform:scaleX(1.0819);">No</span>
<span class="t" id="t52" style="top:141.00px;font-size:12px;color:#8a8a8a;left:886.90px;transform:scaleX(0.9573);">Linked Defects</span>
<span class="t" id="t53" style="top:136.00px;font-size:9.6px;color:#55aedc;font-weight:700;left:996.86px;transform:scaleX(0.9700);">0</span>
<span class="t" id="t54" style="top:172.00px;font-size:12px;color:#fff;-webkit-text-stroke:0.45px #fff;left:31.30px;transform:scaleX(1.0405);">SUMMARY</span>
<span class="t" id="t55" style="top:172.00px;font-size:12px;color:#1e1e1e;-webkit-text-stroke:0.15px #1e1e1e;left:123.80px;transform:scaleX(0.8714);">ORDER LINES</span>
<span class="t" id="t56" style="top:172.00px;font-size:12px;color:#1e1e1e;-webkit-text-stroke:0.15px #1e1e1e;left:226.10px;transform:scaleX(0.8358);">SUPPLIERS</span>
<span class="t" id="t57" style="top:172.00px;font-size:12px;color:#1e1e1e;-webkit-text-stroke:0.15px #1e1e1e;left:314.30px;transform:scaleX(0.8925);">ANALYSIS</span>
<span class="t" id="t58" style="top:172.00px;font-size:12px;color:#1e1e1e;-webkit-text-stroke:0.15px #1e1e1e;left:397.80px;transform:scaleX(0.8665);">FREIGHT DETAILS</span>
<span class="t" id="t59" style="top:172.00px;font-size:12px;color:#1e1e1e;-webkit-text-stroke:0.15px #1e1e1e;left:520.80px;transform:scaleX(0.8505);">DELIVERY</span>
<span class="t" id="t60" style="top:172.00px;font-size:12px;color:#1e1e1e;-webkit-text-stroke:0.15px #1e1e1e;left:602.70px;transform:scaleX(0.9099);">INVOICE</span>
<span class="t" id="t61" style="top:172.00px;font-size:12px;color:#1e1e1e;-webkit-text-stroke:0.15px #1e1e1e;left:679.70px;transform:scaleX(0.9285);">MEMOS</span>
<span class="t" id="t62" style="top:172.00px;font-size:12px;color:#1e1e1e;-webkit-text-stroke:0.15px #1e1e1e;left:753.80px;transform:scaleX(0.9075);">NOTES &amp; ATTACHMENTS</span>
<span class="t" id="t63" style="top:172.00px;font-size:12px;color:#1e1e1e;-webkit-text-stroke:0.15px #1e1e1e;left:915.90px;transform:scaleX(0.8797);">BUDGET</span>
<span class="t" id="t64" style="top:172.00px;font-size:12px;color:#1e1e1e;-webkit-text-stroke:0.15px #1e1e1e;left:991.70px;transform:scaleX(0.8453);">LOGS</span>
<span class="t" id="t65" style="top:239.00px;font-size:15px;color:#0c0c0c;-webkit-text-stroke:0.12px #0c0c0c;left:34.70px;transform:scaleX(0.9869);">Order Details</span>
<span class="t" id="t66" style="top:267.00px;font-size:12px;color:#6e6e6e;left:34.70px;transform:scaleX(0.9571);">Type</span>
<span class="t" id="t67" style="top:267.00px;font-size:12px;color:#1e1e1e;left:69.90px;transform:scaleX(0.9545);">Spares</span>
<span class="t" id="t68" style="top:267.00px;font-size:12px;color:#6e6e6e;left:124.90px;transform:scaleX(1.0176);">Priority</span>
<span class="t" id="t69" style="top:267.00px;font-size:12px;color:#56ad37;left:172.90px;transform:scaleX(1.0680);">Normal</span>
<span class="t" id="t70" style="top:267.00px;font-size:12px;color:#6e6e6e;left:232.10px;transform:scaleX(0.9168);">Lines</span>
<span class="t" id="t71" style="top:267.00px;font-size:12px;color:#2a9ad6;left:268.06px;transform:scaleX(0.9700);">2</span>
<span class="t" id="t72" style="top:267.00px;font-size:12px;color:#6e6e6e;left:292.70px;transform:scaleX(0.9919);">Flight Details</span>
<span class="t" id="t73" style="top:267.00px;font-size:12px;color:#2a9ad6;left:370.70px;transform:scaleX(0.9194);">Yes</span>
<span class="t" id="t74" style="top:267.00px;font-size:12px;color:#6e6e6e;left:406.90px;transform:scaleX(1.0013);">Notes</span>
<span class="t" id="t75" style="top:267.00px;font-size:12px;color:#2a9ad6;left:447.50px;transform:scaleX(0.9296);">Yes</span>
<span class="t" id="t76" style="top:267.00px;font-size:12px;color:#6e6e6e;left:483.70px;transform:scaleX(1.0014);">Memos</span>
<span class="t" id="t77" style="top:267.00px;font-size:12px;color:#2a9ad6;left:532.86px;transform:scaleX(0.9700);">3</span>
<span class="t" id="t78" style="top:267.00px;font-size:12px;color:#6e6e6e;left:558.10px;transform:scaleX(0.9925);">Attachments</span>
<span class="t" id="t79" style="top:267.00px;font-size:12px;color:#2a9ad6;left:633.66px;transform:scaleX(0.9700);">1</span>
<span class="t" id="t80" style="top:267.00px;font-size:12px;color:#6e6e6e;left:659.10px;transform:scaleX(0.9618);">Expected Delivery Date</span>
<span class="t" id="t81" style="top:267.00px;font-size:12px;color:#1e1e1e;left:790.10px;transform:scaleX(1.0355);">19 Aug 2024</span>
<span class="t" id="t82" style="top:267.00px;font-size:12px;color:#6e6e6e;left:877.70px;transform:scaleX(0.9658);">Expected Port</span>
<span class="t" id="t83" style="top:267.00px;font-size:12px;color:#6e6e6e;left:977.70px;transform:scaleX(0.9524);">MD Received</span>
<span class="t" id="t84" style="top:267.00px;font-size:12px;color:#2a9ad6;left:1055.70px;transform:scaleX(1.0949);">No</span>
<span class="t" id="t85" style="top:267.00px;font-size:12px;color:#6e6e6e;left:1090.70px;transform:scaleX(0.9682);">Required For Dry Dock</span>
<span class="t" id="t86" style="top:267.00px;font-size:12px;color:#1e1e1e;left:1219.70px;transform:scaleX(1.0949);">No</span>
<span class="t" id="t87" style="top:267.00px;font-size:12px;color:#6e6e6e;left:1254.50px;transform:scaleX(0.9728);">Rolling PO</span>
<span class="t" id="t88" style="top:267.00px;font-size:12px;color:#1e1e1e;left:1319.70px;transform:scaleX(1.0949);">No</span>
<span class="t" id="t89" style="top:308.00px;font-size:15px;color:#0c0c0c;-webkit-text-stroke:0.12px #0c0c0c;left:35.00px;transform:scaleX(0.9557);">Components (1)</span>
<span class="t" id="t90" style="top:346.00px;font-size:11px;color:#0a0a0a;-webkit-text-stroke:0.22px #0a0a0a;left:43.80px;transform:scaleX(0.8900);">NOTE</span>
<span class="t" id="t91" style="top:346.00px;font-size:11px;color:#0a0a0a;-webkit-text-stroke:0.22px #0a0a0a;left:93.60px;transform:scaleX(0.9161);">COMPONENT</span>
<span class="t" id="t92" style="top:346.00px;font-size:11px;color:#0a0a0a;-webkit-text-stroke:0.22px #0a0a0a;left:193.80px;transform:scaleX(0.9073);">MAKER</span>
<span class="t" id="t93" style="top:346.00px;font-size:11px;color:#0a0a0a;-webkit-text-stroke:0.22px #0a0a0a;left:337.60px;transform:scaleX(0.8482);">SERIAL</span>
<span class="t" id="t94" style="top:346.00px;font-size:11px;color:#0a0a0a;-webkit-text-stroke:0.22px #0a0a0a;left:417.80px;transform:scaleX(0.8213);">TYPE</span>
<span class="t" id="t95" style="top:346.00px;font-size:11px;color:#0a0a0a;-webkit-text-stroke:0.22px #0a0a0a;left:492.80px;transform:scaleX(0.8561);">DESIGNER</span>
<span class="t" id="t96" style="top:346.00px;font-size:11px;color:#0a0a0a;-webkit-text-stroke:0.22px #0a0a0a;left:572.70px;transform:scaleX(0.8758);">CRITICAL</span>
<span class="t" id="t97" style="top:346.00px;font-size:11px;color:#0a0a0a;-webkit-text-stroke:0.22px #0a0a0a;left:637.80px;transform:scaleX(0.8808);">EQUIPMENT CATEGORY</span>
<span class="t" id="t98" style="top:373.00px;font-size:12px;color:#1e1e1e;left:93.60px;transform:scaleX(1.0312);">Main Engine</span>
<span class="t" id="t99" style="top:373.00px;font-size:12px;color:#1e1e1e;left:193.80px;transform:scaleX(1.0022);">Doosan Engine Co., Ltd</span>
<span class="t" id="t100" style="top:373.00px;font-size:12px;color:#1e1e1e;left:337.60px;transform:scaleX(1.0649);">ML-2116</span>
<span class="t" id="t101" style="top:373.00px;font-size:12px;color:#1e1e1e;left:417.80px;transform:scaleX(0.9889);">7S60MC-C</span>
<span class="t" id="t102" style="top:373.00px;font-size:12px;color:#1e1e1e;left:492.80px;transform:scaleX(1.0672);">MAN B&amp;W</span>
<span class="t" id="t103" style="top:373.00px;font-size:12px;color:#1e1e1e;left:637.80px;transform:scaleX(0.9973);">Business critical</span>
<span class="t" id="t104" style="top:389.00px;font-size:12px;color:#1e1e1e;left:637.80px;transform:scaleX(0.9883);">systems</span>
<span class="t" id="t105" style="top:308.00px;font-size:15px;color:#0c0c0c;-webkit-text-stroke:0.12px #0c0c0c;left:980.00px;transform:scaleX(0.9641);">Authorised Supplier (Sup Ref: Q2308915)</span>
<span class="t" id="t106" style="top:336.00px;font-size:12px;color:#6e6e6e;left:980.00px;transform:scaleX(0.9931);">Date Authorised</span>
<span class="t" id="t107" style="top:336.00px;font-size:12px;color:#1e1e1e;left:1075.50px;transform:scaleX(0.9974);">11 Sep 2023</span>
<span class="t" id="t108" style="top:336.00px;font-size:12px;color:#6e6e6e;left:1161.10px;transform:scaleX(0.9810);">Authorised By</span>
<span class="t" id="t109" style="top:336.00px;font-size:12px;color:#1e1e1e;left:1277.10px;transform:scaleX(0.9905);">Babu, Pradeep</span>
<span class="t" id="t110" style="top:336.00px;font-size:12px;color:#6e6e6e;left:1374.10px;transform:scaleX(0.9664);">PO Confirmed Date</span>
<span class="t" id="t111" style="top:353.00px;font-size:12px;color:#6e6e6e;left:980.00px;transform:scaleX(0.9270);">PO Chased Date</span>
<span class="t" id="t112" style="top:353.00px;font-size:12px;color:#6e6e6e;left:1161.10px;transform:scaleX(0.9506);">Invoice Chased Date</span>
<span class="t" id="t113" style="top:353.00px;font-size:12px;color:#6e6e6e;left:1374.10px;transform:scaleX(0.9288);">PO Ref No</span>
<span class="t" id="t114" style="top:478.00px;font-size:12px;color:#6e6e6e;left:980.00px;transform:scaleX(0.9659);">Telephone</span>
<span class="t" id="t115" style="top:495.00px;font-size:12px;color:#6e6e6e;left:980.00px;transform:scaleX(0.9229);">Email</span>
<span class="t" id="t116" style="top:535.00px;font-size:15px;color:#0c0c0c;-webkit-text-stroke:0.12px #0c0c0c;left:35.20px;transform:scaleX(0.8986);">Cost (EUR)</span>
<span class="t" id="t117" style="top:573.00px;font-size:11px;color:#0a0a0a;-webkit-text-stroke:0.22px #0a0a0a;left:199.70px;transform:scaleX(0.9649);">AMOUNT</span>
<span class="t" id="t118" style="top:573.00px;font-size:11px;color:#0a0a0a;-webkit-text-stroke:0.22px #0a0a0a;left:266.60px;transform:scaleX(0.9249);">OUTSTANDING</span>
<span class="t" id="t119" style="top:600.00px;font-size:12px;color:#1e1e1e;left:43.60px;transform:scaleX(1.0040);">Goods / Service Balance</span>
<span class="t" id="t120" style="top:600.00px;font-size:12px;color:#1e1e1e;left:204.70px;transform:scaleX(0.9932);">6,720.00</span>
<span class="t" id="t121" style="top:600.00px;font-size:12px;color:#1e1e1e;left:321.80px;transform:scaleX(0.9889);">0.00</span>
<span class="t" id="t122" style="top:629.00px;font-size:12px;color:#1e1e1e;left:43.60px;transform:scaleX(1.0248);">Freight / Delivery Balance</span>
<span class="t" id="t123" style="top:629.00px;font-size:12px;color:#1e1e1e;left:227.80px;transform:scaleX(0.9975);">0.00</span>
<span class="t" id="t124" style="top:629.00px;font-size:12px;color:#1e1e1e;left:321.80px;transform:scaleX(0.9889);">0.00</span>
<span class="t" id="t125" style="top:658.00px;font-size:12px;color:#1e1e1e;left:43.60px;transform:scaleX(0.9976);clip-path:inset(-2px -2px 1.2px -2px);">Packaging Balance</span>
<span class="t" id="t126" style="top:658.00px;font-size:12px;color:#1e1e1e;left:227.80px;transform:scaleX(0.9975);clip-path:inset(-2px -2px 1.2px -2px);">0.00</span>
<span class="t" id="t127" style="top:658.00px;font-size:12px;color:#1e1e1e;left:321.80px;transform:scaleX(0.9889);clip-path:inset(-2px -2px 1.2px -2px);">0.00</span>
<span class="t" id="t128" style="top:677.00px;font-size:13px;color:#999;left:39.60px;transform:scaleX(0.9667);">Total PO</span>
<span class="t" id="t129" style="top:677.00px;font-size:13px;color:#111;-webkit-text-stroke:0.5px #111;left:203.30px;transform:scaleX(0.9445);">6,720.00</span>
<span class="t" id="t130" style="top:677.00px;font-size:13px;color:#111;-webkit-text-stroke:0.5px #111;left:320.80px;transform:scaleX(0.9521);">0.00</span>
<span class="t" id="t131" style="top:535.00px;font-size:15px;color:#0c0c0c;-webkit-text-stroke:0.12px #0c0c0c;left:980.10px;transform:scaleX(0.9338);">Invoices (1)</span>
<span class="t" id="t132" style="top:580.00px;font-size:11px;color:#0a0a0a;-webkit-text-stroke:0.22px #0a0a0a;left:988.90px;transform:scaleX(0.8653);">DOCS</span>
<span class="t" id="t133" style="top:580.00px;font-size:11px;color:#0a0a0a;-webkit-text-stroke:0.22px #0a0a0a;left:1038.90px;transform:scaleX(0.8548);">STATUS</span>
<span class="t" id="t134" style="top:580.00px;font-size:11px;color:#0a0a0a;-webkit-text-stroke:0.22px #0a0a0a;left:1121.00px;transform:scaleX(0.8033);">REFERENCE</span>
<span class="t" id="t135" style="top:580.00px;font-size:11px;color:#0a0a0a;-webkit-text-stroke:0.22px #0a0a0a;left:1196.90px;transform:scaleX(0.9586);">AMOUNT</span>
<span class="t" id="t136" style="top:580.00px;font-size:11px;color:#0a0a0a;-webkit-text-stroke:0.22px #0a0a0a;left:1263.60px;transform:scaleX(0.8533);">CURRENCY</span>
<span class="t" id="t137" style="top:580.00px;font-size:11px;color:#0a0a0a;-webkit-text-stroke:0.22px #0a0a0a;left:1337.80px;transform:scaleX(0.8931);">INVOICE DATE</span>
<span class="t" id="t138" style="top:580.00px;font-size:11px;color:#0a0a0a;-webkit-text-stroke:0.22px #0a0a0a;left:1427.60px;transform:scaleX(0.9107);">PAID DATE</span>
<span class="t" id="t139" style="top:566.00px;font-size:11px;color:#0a0a0a;-webkit-text-stroke:0.22px #0a0a0a;left:1512.00px;transform:scaleX(0.8723);">PREPAYMENT</span>
<span class="t" id="t140" style="top:579.00px;font-size:11px;color:#0a0a0a;-webkit-text-stroke:0.22px #0a0a0a;left:1512.00px;transform:scaleX(0.8975);">INVOICE</span>
<span class="t" id="t141" style="top:609.00px;font-size:12px;color:#56ad37;left:1038.90px;transform:scaleX(1.0126);">Invoice Paid</span>
<span class="t" id="t142" style="top:607.00px;font-size:12px;color:#1e1e1e;left:1121.00px;transform:scaleX(1.0343);">234119</span>
<span class="t" id="t143" style="top:607.00px;font-size:12px;color:#1e1e1e;left:1202.20px;transform:scaleX(0.9868);">7,255.00</span>
<span class="t" id="t144" style="top:607.00px;font-size:12px;color:#1e1e1e;left:1263.60px;transform:scaleX(0.8996);">EUR</span>
<span class="t" id="t145" style="top:607.00px;font-size:12px;color:#1e1e1e;left:1340.10px;transform:scaleX(1.0182);">24 Nov 2023</span>
<span class="t" id="t146" style="top:607.00px;font-size:12px;color:#1e1e1e;left:1427.60px;transform:scaleX(1.0035);">27 Dec 2023</span>
<span class="t" id="t147" style="top:723.00px;font-size:15px;color:#0c0c0c;-webkit-text-stroke:0.12px #0c0c0c;left:35.10px;transform:scaleX(0.9814);">Freight Details</span>
<span class="t" id="t148" style="top:751.00px;font-size:12px;color:#6e6e6e;left:35.10px;transform:scaleX(0.9485);">No. of Pieces</span>
<span class="t" id="t149" style="top:751.00px;font-size:12px;color:#1e1e1e;left:113.16px;transform:scaleX(0.9700);">1</span>
<span class="t" id="t150" style="top:751.00px;font-size:12px;color:#6e6e6e;left:137.90px;transform:scaleX(0.9647);">Weight (in KG)</span>
<span class="t" id="t151" style="top:751.00px;font-size:12px;color:#1e1e1e;left:223.90px;transform:scaleX(0.9890);">400.00</span>
<span class="t" id="t152" style="top:751.00px;font-size:12px;color:#6e6e6e;left:278.40px;transform:scaleX(0.9520);">Total CBM</span>
<span class="t" id="t153" style="top:751.00px;font-size:12px;color:#1e1e1e;left:341.36px;transform:scaleX(0.9700);">0</span>
<span class="t" id="t154" style="top:769.00px;font-size:12px;color:#6e6e6e;left:35.10px;transform:scaleX(0.9795);">Freight Order</span>
<span class="t" id="t155" style="top:769.00px;font-size:12px;color:#2a9ad6;left:154.80px;transform:scaleX(1.0309);">3835 - 90911</span>
<span class="t" id="t156" style="top:788.00px;font-size:12px;color:#6e6e6e;left:35.10px;transform:scaleX(0.9885);">Transport Mode</span>
<span class="t" id="t157" style="top:788.00px;font-size:12px;color:#1e1e1e;left:154.80px;transform:scaleX(1.0633);">Air</span>
<span class="t" id="t158" style="top:806.00px;font-size:12px;color:#6e6e6e;left:35.10px;transform:scaleX(0.9539);">AWB / Reference No.</span>
<span class="t" id="t159" style="top:806.00px;font-size:12px;color:#1e1e1e;left:154.80px;transform:scaleX(1.0142);">8217850056</span>
<span class="t" id="t160" style="top:723.00px;font-size:15px;color:#0c0c0c;-webkit-text-stroke:0.12px #0c0c0c;left:980.10px;transform:scaleX(0.9862);">Delivery To</span>
<span class="t" id="t161" style="top:751.00px;font-size:12px;color:#6e6e6e;left:980.10px;transform:scaleX(0.9697);">Ordered Date</span>
<span class="t" id="t162" style="top:751.00px;font-size:12px;color:#1e1e1e;left:1061.60px;transform:scaleX(0.9785);">12 Sep 2023</span>
<span class="t" id="t163" style="top:751.00px;font-size:12px;color:#6e6e6e;left:1160.30px;transform:scaleX(0.9766);">Port</span>
<span class="t" id="t164" style="top:768.00px;font-size:12px;color:#6e6e6e;left:980.10px;transform:scaleX(0.9391);">Expected</span>
<span class="t" id="t165" style="top:768.00px;font-size:12px;color:#fa3112;left:1061.60px;transform:scaleX(1.0222);">19 Aug 2024</span>
<span class="t" id="t166" style="top:768.00px;font-size:12px;color:#6e6e6e;left:1160.30px;transform:scaleX(0.9218);">Ex Works Days</span>
<span class="t" id="t167" style="top:768.00px;font-size:12px;color:#1e1e1e;left:1245.80px;transform:scaleX(1.0030);">49</span>
<span class="t" id="t168" style="top:792.00px;font-size:15px;color:#161616;-webkit-text-stroke:0.25px #161616;left:980.10px;transform:scaleX(0.9572);">Warehouse</span>
<span class="t" id="t169" style="top:902.00px;font-size:12px;color:#6e6e6e;left:979.90px;transform:scaleX(0.9749);">Telephone</span>
<span class="t" id="t170" style="top:919.00px;font-size:12px;color:#6e6e6e;left:980.20px;transform:scaleX(0.9229);">Email</span>
<span class="t" id="t171" style="top:496.00px;font-size:15.33px;color:#111;left:671.00px;transform:scaleX(1.0036);">Click on the Pencil Icon</span>
<span class="t" id="t172" style="top:514.00px;font-size:15.33px;color:#111;left:676.50px;transform:scaleX(1.0148);">to change the Accrual</span>
<span class="t" id="t173" style="top:532.00px;font-size:15.33px;color:#111;left:725.60px;transform:scaleX(1.0051);">amount</span>
</div></body></html>
